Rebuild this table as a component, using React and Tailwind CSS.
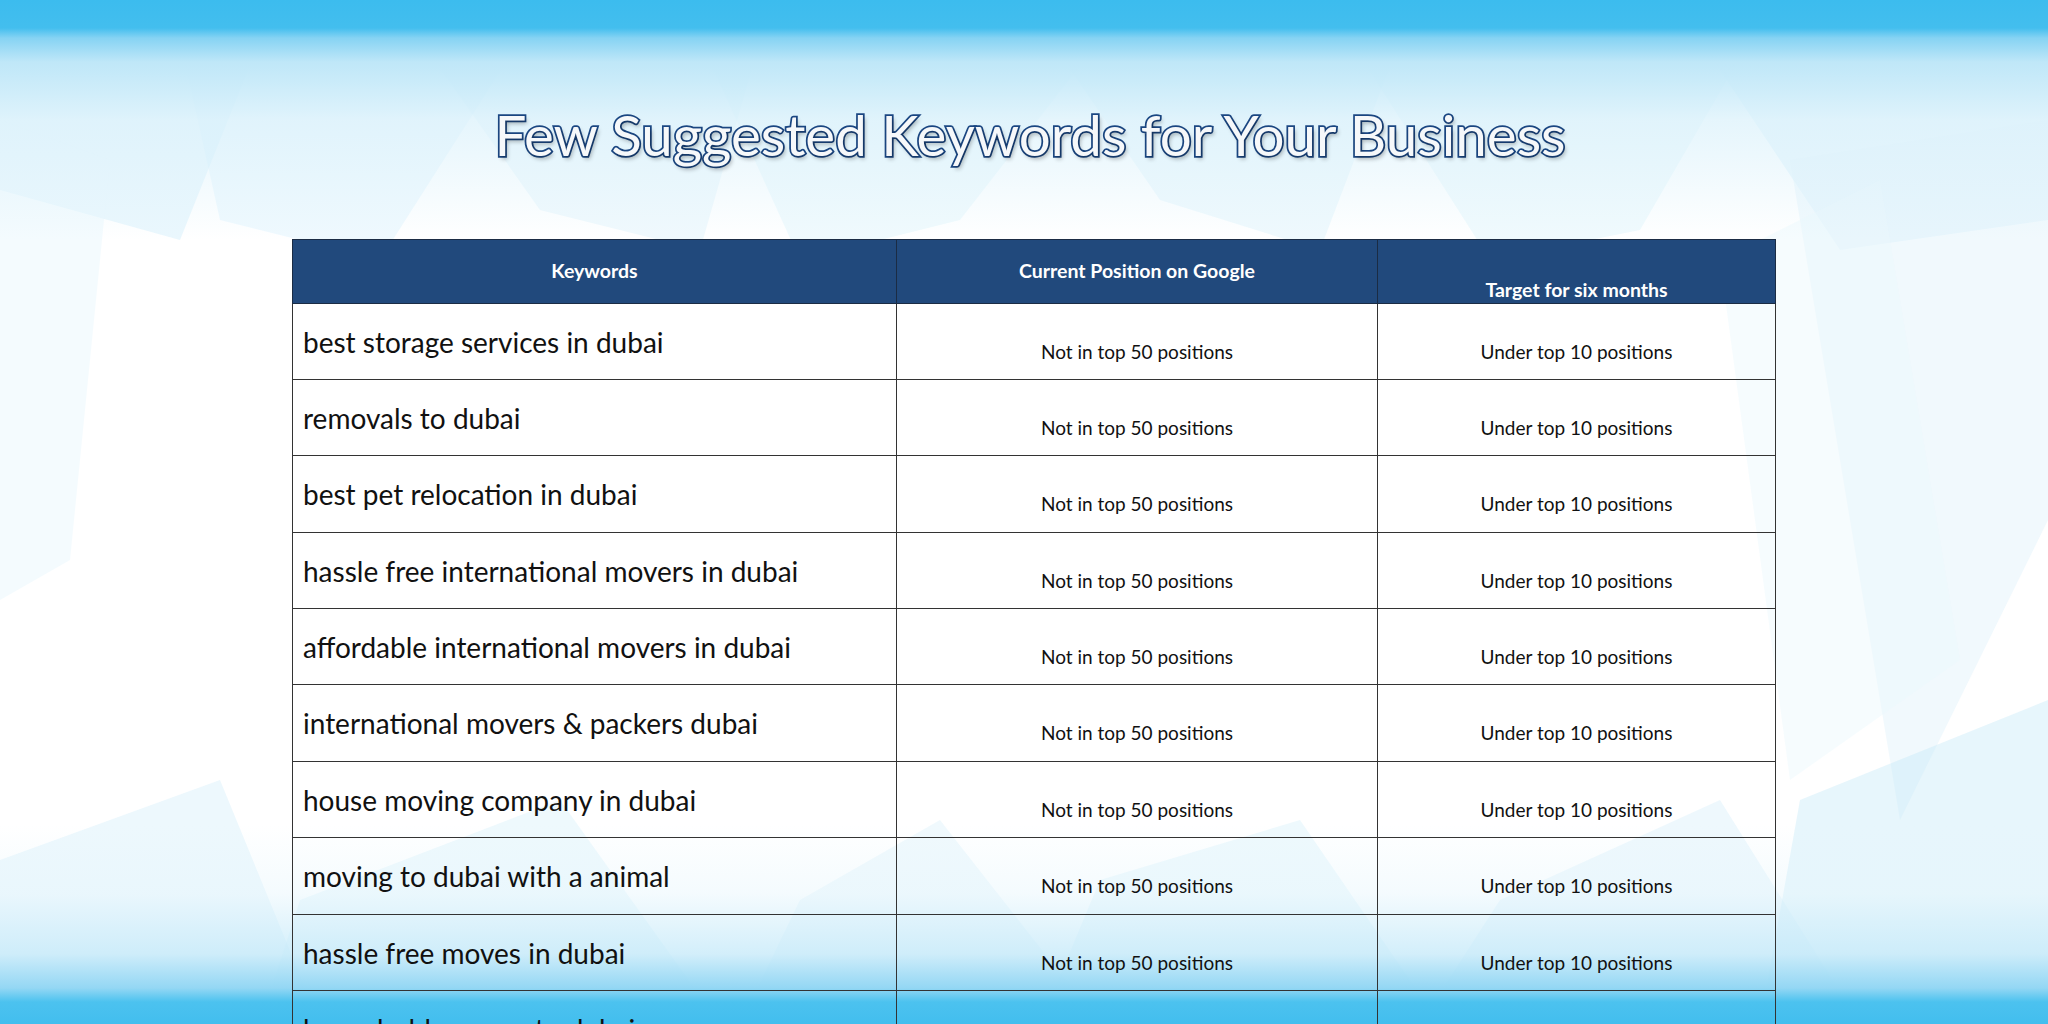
import React from "react";

const rows = [
  "best storage services in dubai",
  "removals to dubai",
  "best pet relocation in dubai",
  "hassle free international movers in dubai",
  "affordable international movers in dubai",
  "international movers & packers dubai",
  "house moving company in dubai",
  "moving to dubai with a animal",
  "hassle free moves in dubai",
  "household movers to dubai",
];

// faint low-poly shards behind the slide
const shards = [
  { points: "0,40 260,40 180,240 0,190", fill: "#c4e9f9", opacity: 0.35 },
  { points: "180,40 520,40 380,260 220,220", fill: "#d2effb", opacity: 0.35 },
  { points: "420,40 760,40 700,250 540,210", fill: "#c2e7f8", opacity: 0.25 },
  { points: "700,40 1100,40 960,220 800,260", fill: "#cdedfa", opacity: 0.3 },
  { points: "1050,40 1400,40 1320,250 1160,200", fill: "#c6e9f9", opacity: 0.28 },
  { points: "1350,40 1750,40 1640,230 1490,260", fill: "#cdedfa", opacity: 0.3 },
  { points: "1700,40 2048,40 2048,220 1840,250", fill: "#c4e8f8", opacity: 0.35 },
  { points: "0,120 110,160 70,560 0,600", fill: "#eaf7fd", opacity: 0.5 },
  { points: "1790,160 2048,120 2048,520 1900,820", fill: "#e4f4fc", opacity: 0.5 },
  { points: "1720,260 1880,180 1960,660 1790,780", fill: "#ecf8fd", opacity: 0.45 },
  { points: "0,860 220,780 320,1024 0,1024", fill: "#cbebf9", opacity: 0.35 },
  { points: "300,900 560,800 720,1024 260,1024", fill: "#c8eaf9", opacity: 0.3 },
  { points: "800,900 940,820 1100,1024 740,1024", fill: "#cdebf9", opacity: 0.3 },
  { points: "1100,880 1300,820 1440,1024 1040,1024", fill: "#c8eaf9", opacity: 0.3 },
  { points: "1500,900 1720,800 1860,1024 1420,1024", fill: "#c9eaf9", opacity: 0.32 },
  { points: "1800,800 2048,700 2048,1024 1760,1024", fill: "#c4e8f8", opacity: 0.4 },
];

function Backdrop() {
  return (
    <div className="absolute inset-0">
      <svg className="absolute inset-0" width="2048" height="1024" viewBox="0 0 2048 1024">
        {shards.map((s, i) => (
          <polygon key={i} points={s.points} fill={s.fill} opacity={s.opacity} />
        ))}
      </svg>
      <div className="absolute inset-x-0 top-0 h-[240px] bg-[linear-gradient(to_bottom,#3cbcee_0px,#43beee_28px,#86d3f3_38px,#bfe7f8_62px,rgba(218,241,251,0.7)_120px,rgba(255,255,255,0)_240px)]" />
      <div className="absolute inset-x-0 bottom-0 h-[200px] bg-[linear-gradient(to_top,#42beee_0px,#4cc2ef_22px,#94d7f4_36px,rgba(196,233,249,0.75)_70px,rgba(228,245,252,0.4)_130px,rgba(255,255,255,0)_200px)]" />
    </div>
  );
}

export default function App() {
  return (
    <div className="relative h-[1024px] w-[2048px] overflow-hidden bg-white font-['Lato',sans-serif]">
      <Backdrop />
      <div className="relative pt-[106px]">
        <h1 className="pl-[12px] text-center text-[56.5px] leading-none text-[#f6f8fa] [-webkit-text-stroke:3.5px_#1b4783] [paint-order:stroke_fill] [text-shadow:2px_3px_4px_rgba(0,0,0,0.3)]">
          Few Suggested Keywords for Your Business
        </h1>

        <table className="ml-[292px] mt-[76px] w-[1483px] table-fixed border-collapse">
          <colgroup>
            <col className="w-[604px]" />
            <col className="w-[481px]" />
            <col className="w-[398px]" />
          </colgroup>
          <thead>
            <tr className="h-[64px] bg-[#21497c] text-[19.5px] font-bold leading-[1.2] text-white">
              <th className="border border-[#1b2c44] align-middle">Keywords</th>
              <th className="border border-[#1b2c44] align-middle">Current Position on Google</th>
              <th className="border border-[#1b2c44] pb-[1px] align-bottom">Target for six months</th>
            </tr>
          </thead>
          <tbody>
            {rows.map((keyword) => (
              <tr key={keyword} className="h-[76.4px]">
                <td className="border border-[#333] pl-[10px] pt-[22px] align-top text-[28px] leading-[1.2] text-[#111]">
                  {keyword}
                </td>
                <td className="border border-[#333] pt-[37px] text-center align-top text-[19px] leading-[1.2] text-[#111]">
                  Not in top 50 positions
                </td>
                <td className="border border-[#333] pt-[37px] text-center align-top text-[19px] leading-[1.2] text-[#111]">
                  Under top 10 positions
                </td>
              </tr>
            ))}
          </tbody>
        </table>
      </div>
    </div>
  );
}
